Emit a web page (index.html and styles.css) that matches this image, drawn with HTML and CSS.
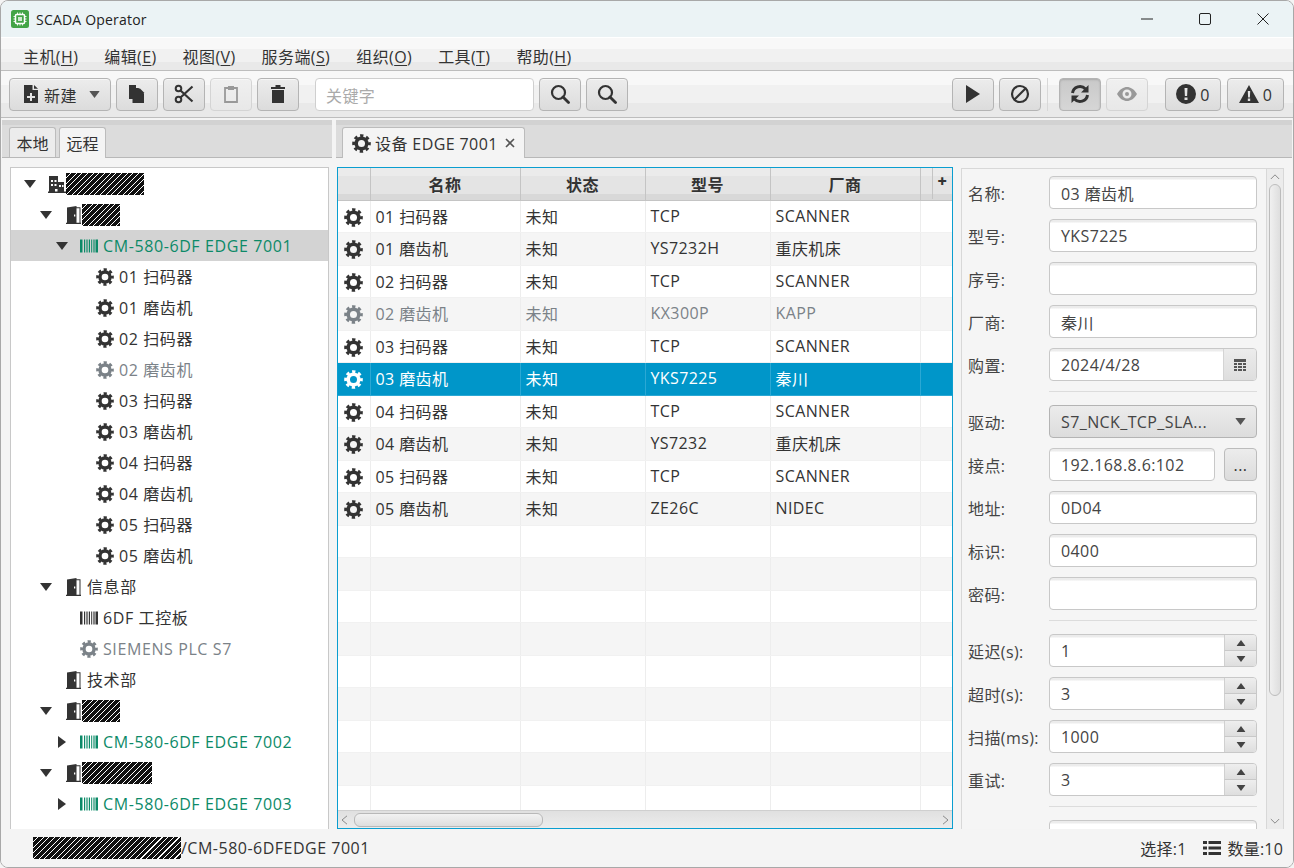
FILE: index.html
```html
<!DOCTYPE html>
<html lang="zh">
<head>
<meta charset="utf-8">
<title>SCADA Operator</title>
<link rel="stylesheet" href="styles.css">
</head>
<body>
<svg class="defs" width="0" height="0">
  <symbol id="gear" viewBox="0 0 20 20">
    <circle cx="10" cy="10" r="5.6" fill="none" stroke="currentColor" stroke-width="3.8"/>
    <circle cx="10" cy="10" r="8.2" fill="none" stroke="currentColor" stroke-width="3.2" stroke-dasharray="3.44 3" stroke-dashoffset="1.72"/>
  </symbol>
  <symbol id="door" viewBox="0 0 18 18">
    <path fill="currentColor" d="M2 18v-1.200h1V1.500L12.500 0v16.800h3V2.200h-3V1.200h4v15.600h.5V18H2zM10 8.500v2h1.300v-2H10z"/>
  </symbol>
  <symbol id="building" viewBox="0 0 18 18">
    <path fill="currentColor" fill-rule="evenodd" d="M0 18v-1.500h1V1h9v6h6v9.500h2V18H0zM3 9h2v2H3V9zm3.500 0h2v2h-2V9zM11 10h2v2h-2v-2zm3 0h1.500v2H14v-2zM3 5h2v2H3V5zm3.500 0h2v2h-2V5zM7 14h2.500v2.500H7V14z"/>
  </symbol>
  <symbol id="barcode" viewBox="0 0 18 18">
    <path fill="currentColor" d="M0 2.500h2.500v13H0zM4 2.500h1.200v13H4zM6.400 2.500h1.200v13H6.400zM8.800 2.500h1.200v13H8.800zM11.200 2.500h1v13h-1zM13.400 2.500h1.200v13h-1.200zM15.500 2.500H18v13h-2.500z"/>
  </symbol>
  <symbol id="down" viewBox="0 0 12 8"><path fill="currentColor" d="M0 0h12L6 8z"/></symbol>
  <symbol id="up" viewBox="0 0 12 8"><path fill="currentColor" d="M0 8h12L6 0z"/></symbol>
  <symbol id="right" viewBox="0 0 8 12"><path fill="currentColor" d="M0 0v12l8-6z"/></symbol>
  <symbol id="search" viewBox="0 0 20 20">
    <circle cx="8.500" cy="8.500" r="6.500" fill="none" stroke="currentColor" stroke-width="2.200"/>
    <path d="M13 13l5.500 5.500" stroke="currentColor" stroke-width="2.800" stroke-linecap="round"/>
  </symbol>
</svg>

<div class="window">
  <header class="titlebar">
    <svg class="app-icon" viewBox="0 0 18 18">
      <rect width="18" height="18" rx="2.500" fill="#43a447"/>
      <rect x="4.500" y="4.500" width="9" height="9" rx="1" fill="none" stroke="#fff" stroke-width="1.500"/>
      <rect x="7" y="7" width="4" height="4" fill="#cfe8d0"/>
      <path d="M6.500 2.500v2M9 2.500v2M11.500 2.500v2M6.500 13.500v2M9 13.500v2M11.500 13.500v2M2.500 6.500h2M2.500 9h2M2.500 11.500h2M13.500 6.500h2M13.500 9h2M13.500 11.500h2" stroke="#fff" stroke-width=".9"/>
    </svg>
    <span class="app-title">SCADA Operator</span>
    <div class="win-controls">
      <svg viewBox="0 0 12 12"><path d="M0 6h12" stroke="#222" stroke-width="1"/></svg>
      <svg viewBox="0 0 12 12"><rect x=".5" y=".5" width="11" height="11" rx="1.500" fill="none" stroke="#222"/></svg>
      <svg viewBox="0 0 12 12"><path d="M.5.500l11 11M11.500.500l-11 11" stroke="#222"/></svg>
    </div>
  </header>

  <nav class="menubar">
    <span>主机(<u>H</u>)</span><span>编辑(<u>E</u>)</span><span>视图(<u>V</u>)</span><span>服务端(<u>S</u>)</span><span>组织(<u>O</u>)</span><span>工具(<u>T</u>)</span><span>帮助(<u>H</u>)</span>
  </nav>

  <div class="toolbar">
    <button class="btn btn-new">
      <svg class="ico" viewBox="0 0 14 18"><path fill="#333" fill-rule="evenodd" d="M0 0h8.500v5H14v13H0zM10 0l4 3.800H10zM6 8v3H3v2h3v3h2v-3h3v-2H8V8z"/></svg>
      <span>新建</span>
      <svg class="caret" viewBox="0 0 12 8"><use href="#down"/></svg>
    </button>
    <button class="btn"><svg class="ico" viewBox="0 0 16 18"><path fill="#333" d="M0 0h7v14H0zM3.500 3H9.500l5.500 5.500V18H3.500zM10.500 3l5 5h-5z"/></svg></button>
    <button class="btn"><svg class="ico-l" viewBox="0 0 20 20"><circle cx="4.500" cy="15.500" r="2.800" fill="none" stroke="#333" stroke-width="2"/><circle cx="4.500" cy="4.500" r="2.800" fill="none" stroke="#333" stroke-width="2"/><path d="M6.500 6.500L18.500 17.500M6.500 13.500L18.500 2.500" stroke="#333" stroke-width="2.200"/></svg></button>
    <button class="btn disabled"><svg class="ico" viewBox="0 0 14 18"><path fill="none" stroke="#999" stroke-width="1.800" d="M1 3h12v14H1z"/><path fill="#999" d="M4 1h6v4H4z"/></svg></button>
    <button class="btn"><svg class="ico" viewBox="0 0 14 18"><path fill="#333" d="M1 5h12v13H1zM0 2h14v2H0zM4.500 0h5v2h-5z"/></svg></button>
    <div class="search-box">关键字</div>
    <button class="btn"><svg class="ico-l" viewBox="0 0 20 20"><use href="#search" color="#333"/></svg></button>
    <button class="btn"><svg class="ico-l" viewBox="0 0 20 20"><use href="#search" color="#333"/></svg></button>
    <div class="spacer"></div>
    <button class="btn"><svg class="ico" viewBox="0 0 14 18"><path fill="#333" d="M0 0l14 9-14 9z"/></svg></button>
    <button class="btn"><svg class="ico-l" viewBox="0 0 20 20"><circle cx="10" cy="10" r="8" fill="none" stroke="#333" stroke-width="2.200"/><path d="M15.500 4.500l-11 11" stroke="#333" stroke-width="2.200"/></svg></button>
    <div class="tb-sep"></div>
    <button class="btn pressed"><svg class="ico-l" viewBox="0 0 20 20"><path fill="none" stroke="#333" stroke-width="3" d="M2.500 9A7.500 7.500 0 0 1 15.500 5M17.500 11A7.500 7.500 0 0 1 4.500 15"/><path fill="#333" d="M18.500 1v7.500H11zM1.500 19v-7.500H9z"/></svg></button>
    <button class="btn disabled"><svg class="ico-l" viewBox="0 0 20 14"><path fill="#999" fill-rule="evenodd" d="M0 7C3 2 6.500 0 10 0s7 2 10 7c-3 5-6.500 7-10 7S3 12 0 7zm10-4.500a4.500 4.500 0 1 0 0 9 4.500 4.500 0 0 0 0-9zM10 5a2 2 0 1 1 0 4 2 2 0 0 1 0-4z"/></svg></button>
    <button class="btn btn-count first"><svg class="ico-l" viewBox="0 0 20 20"><path fill="#333" fill-rule="evenodd" d="M10 0a10 10 0 1 1 0 20 10 10 0 0 1 0-20zM8.500 4l.4 8h2.200l.4-8zM8.500 13.500v2.500h3v-2.500z"/></svg><span>0</span></button>
    <button class="btn btn-count"><svg class="ico-l" viewBox="0 0 20 18"><path fill="#333" fill-rule="evenodd" d="M10 0l10 18H0zM8.800 6l.3 6.500h1.800l.3-6.500zM8.800 13.500V16h2.400v-2.500z"/></svg><span>0</span></button>
  </div>

  <main class="main">
    <section class="left-pane">
      <div class="tab-header">
        <div class="tab">本地</div>
        <div class="tab active">远程</div>
      </div>
      <div class="tree-wrap">
        <div class="tree">
          <div class="row l0"><svg class="arrow"><use href="#down"/></svg><svg class="node"><use href="#building"/></svg><i class="redact r78"></i></div>
          <div class="row l1"><svg class="arrow"><use href="#down"/></svg><svg class="node"><use href="#door"/></svg><i class="redact r38"></i></div>
          <div class="row l2 current"><svg class="arrow"><use href="#down"/></svg><svg class="node green"><use href="#barcode"/></svg><span class="green latin">CM-580-6DF EDGE 7001</span></div>
          <div class="row l3"><span class="arrow"></span><svg class="node"><use href="#gear"/></svg><span>01 扫码器</span></div>
          <div class="row l3"><span class="arrow"></span><svg class="node"><use href="#gear"/></svg><span>01 磨齿机</span></div>
          <div class="row l3"><span class="arrow"></span><svg class="node"><use href="#gear"/></svg><span>02 扫码器</span></div>
          <div class="row l3 muted"><span class="arrow"></span><svg class="node"><use href="#gear"/></svg><span>02 磨齿机</span></div>
          <div class="row l3"><span class="arrow"></span><svg class="node"><use href="#gear"/></svg><span>03 扫码器</span></div>
          <div class="row l3"><span class="arrow"></span><svg class="node"><use href="#gear"/></svg><span>03 磨齿机</span></div>
          <div class="row l3"><span class="arrow"></span><svg class="node"><use href="#gear"/></svg><span>04 扫码器</span></div>
          <div class="row l3"><span class="arrow"></span><svg class="node"><use href="#gear"/></svg><span>04 磨齿机</span></div>
          <div class="row l3"><span class="arrow"></span><svg class="node"><use href="#gear"/></svg><span>05 扫码器</span></div>
          <div class="row l3"><span class="arrow"></span><svg class="node"><use href="#gear"/></svg><span>05 磨齿机</span></div>
          <div class="row l1"><svg class="arrow"><use href="#down"/></svg><svg class="node"><use href="#door"/></svg><span>信息部</span></div>
          <div class="row l2"><span class="arrow"></span><svg class="node"><use href="#barcode"/></svg><span>6DF 工控板</span></div>
          <div class="row l2 muted"><span class="arrow"></span><svg class="node"><use href="#gear"/></svg><span class="latin">SIEMENS PLC S7</span></div>
          <div class="row l1"><span class="arrow"></span><svg class="node"><use href="#door"/></svg><span>技术部</span></div>
          <div class="row l1"><svg class="arrow"><use href="#down"/></svg><svg class="node"><use href="#door"/></svg><i class="redact r38"></i></div>
          <div class="row l2"><svg class="arrow side"><use href="#right"/></svg><svg class="node green"><use href="#barcode"/></svg><span class="green latin">CM-580-6DF EDGE 7002</span></div>
          <div class="row l1"><svg class="arrow"><use href="#down"/></svg><svg class="node"><use href="#door"/></svg><i class="redact r70"></i></div>
          <div class="row l2"><svg class="arrow side"><use href="#right"/></svg><svg class="node green"><use href="#barcode"/></svg><span class="green latin">CM-580-6DF EDGE 7003</span></div>
        </div>
      </div>
    </section>

    <section class="right-pane">
      <div class="tab-header doc">
        <div class="tab active doc-tab">
          <svg class="node"><use href="#gear"/></svg><span>设备 EDGE 7001</span>
          <svg class="close" viewBox="0 0 10 10"><path d="M1 1l8 8M9 1l-8 8" stroke="#555" stroke-width="1.600"/></svg>
        </div>
      </div>
      <div class="doc-body">
        <div class="table-box">
          <div class="table-clip">
            <table class="grid">
              <colgroup><col class="c-i"><col class="c-n"><col class="c-s"><col class="c-m"><col class="c-v"><col></colgroup>
              <thead><tr><th></th><th>名称</th><th>状态</th><th>型号</th><th>厂商</th><th class="plus-cell"><span class="plus">+</span></th></tr></thead>
              <tbody>
                <tr><td class="ic"><svg class="node"><use href="#gear"/></svg></td><td>01 扫码器</td><td>未知</td><td>TCP</td><td>SCANNER</td><td></td></tr>
                <tr><td class="ic"><svg class="node"><use href="#gear"/></svg></td><td>01 磨齿机</td><td>未知</td><td>YS7232H</td><td>重庆机床</td><td></td></tr>
                <tr><td class="ic"><svg class="node"><use href="#gear"/></svg></td><td>02 扫码器</td><td>未知</td><td>TCP</td><td>SCANNER</td><td></td></tr>
                <tr class="muted"><td class="ic"><svg class="node"><use href="#gear"/></svg></td><td>02 磨齿机</td><td>未知</td><td>KX300P</td><td>KAPP</td><td></td></tr>
                <tr><td class="ic"><svg class="node"><use href="#gear"/></svg></td><td>03 扫码器</td><td>未知</td><td>TCP</td><td>SCANNER</td><td></td></tr>
                <tr class="selected"><td class="ic"><svg class="node"><use href="#gear"/></svg></td><td>03 磨齿机</td><td>未知</td><td>YKS7225</td><td>秦川</td><td></td></tr>
                <tr><td class="ic"><svg class="node"><use href="#gear"/></svg></td><td>04 扫码器</td><td>未知</td><td>TCP</td><td>SCANNER</td><td></td></tr>
                <tr><td class="ic"><svg class="node"><use href="#gear"/></svg></td><td>04 磨齿机</td><td>未知</td><td>YS7232</td><td>重庆机床</td><td></td></tr>
                <tr><td class="ic"><svg class="node"><use href="#gear"/></svg></td><td>05 扫码器</td><td>未知</td><td>TCP</td><td>SCANNER</td><td></td></tr>
                <tr><td class="ic"><svg class="node"><use href="#gear"/></svg></td><td>05 磨齿机</td><td>未知</td><td>ZE26C</td><td>NIDEC</td><td></td></tr>
                <tr><td></td><td></td><td></td><td></td><td></td><td></td></tr>
                <tr><td></td><td></td><td></td><td></td><td></td><td></td></tr>
                <tr><td></td><td></td><td></td><td></td><td></td><td></td></tr>
                <tr><td></td><td></td><td></td><td></td><td></td><td></td></tr>
                <tr><td></td><td></td><td></td><td></td><td></td><td></td></tr>
                <tr><td></td><td></td><td></td><td></td><td></td><td></td></tr>
                <tr><td></td><td></td><td></td><td></td><td></td><td></td></tr>
                <tr><td></td><td></td><td></td><td></td><td></td><td></td></tr>
                <tr><td></td><td></td><td></td><td></td><td></td><td></td></tr>
              </tbody>
            </table>
          </div>
          <div class="hscroll">
            <svg class="sb-arrow" viewBox="0 0 8 12"><path d="M7 1L1 6l6 5" fill="none" stroke="#777"/></svg>
            <div class="hthumb-track"><div class="hthumb"></div></div>
            <svg class="sb-arrow" viewBox="0 0 8 12"><path d="M1 1l6 5-6 5" fill="none" stroke="#777"/></svg>
          </div>
        </div>

        <div class="form-box">
          <div class="form">
            <div class="f-row"><label>名称:</label><div class="field">03 磨齿机</div></div>
            <div class="f-row"><label>型号:</label><div class="field">YKS7225</div></div>
            <div class="f-row"><label>序号:</label><div class="field"></div></div>
            <div class="f-row"><label>厂商:</label><div class="field">秦川</div></div>
            <div class="f-row"><label>购置:</label><div class="field joined"><span class="grow">2024/4/28</span><span class="cal"><svg viewBox="0 0 12 12"><path fill="#555" d="M0 0h12v3H0zM0 4h3v2H0zM4 4h4v2H4zM9 4h3v2H9zM0 7h3v2H0zM4 7h4v2H4zM9 7h3v2H9zM0 10h3v2H0zM4 10h4v2H4zM9 10h3v2H9z"/></svg></span></div></div>
            <div class="f-sep"></div>
            <div class="f-row"><label>驱动:</label><div class="combo"><span class="grow">S7_NCK_TCP_SLA...</span><svg class="caret" viewBox="0 0 12 8"><use href="#down"/></svg></div></div>
            <div class="f-row"><label>接点:</label><div class="field short">192.168.8.6:102</div><div class="more">...</div></div>
            <div class="f-row"><label>地址:</label><div class="field">0D04</div></div>
            <div class="f-row"><label>标识:</label><div class="field">0400</div></div>
            <div class="f-row"><label>密码:</label><div class="field"></div></div>
            <div class="f-sep"></div>
            <div class="f-row"><label>延迟(s):</label><div class="field joined"><span class="grow">1</span><span class="spin"><b><svg viewBox="0 0 12 8"><use href="#up"/></svg></b><b><svg viewBox="0 0 12 8"><use href="#down"/></svg></b></span></div></div>
            <div class="f-row"><label>超时(s):</label><div class="field joined"><span class="grow">3</span><span class="spin"><b><svg viewBox="0 0 12 8"><use href="#up"/></svg></b><b><svg viewBox="0 0 12 8"><use href="#down"/></svg></b></span></div></div>
            <div class="f-row"><label>扫描(ms):</label><div class="field joined"><span class="grow">1000</span><span class="spin"><b><svg viewBox="0 0 12 8"><use href="#up"/></svg></b><b><svg viewBox="0 0 12 8"><use href="#down"/></svg></b></span></div></div>
            <div class="f-row"><label>重试:</label><div class="field joined"><span class="grow">3</span><span class="spin"><b><svg viewBox="0 0 12 8"><use href="#up"/></svg></b><b><svg viewBox="0 0 12 8"><use href="#down"/></svg></b></span></div></div>
            <div class="f-sep"></div>
            <div class="f-row"><label></label><div class="field"></div></div>
          </div>
          <div class="vscroll">
            <svg class="sb-arrow-v" viewBox="0 0 12 8"><path d="M1 7l5-5 5 5" fill="none" stroke="#777"/></svg>
            <div class="vthumb-track"><div class="vthumb"></div></div>
            <svg class="sb-arrow-v" viewBox="0 0 12 8"><path d="M1 1l5 5 5-5" fill="none" stroke="#777"/></svg>
          </div>
        </div>
      </div>
    </section>
  </main>

  <footer class="statusbar">
    <i class="redact r148"></i><span class="path">/CM-580-6DFEDGE 7001</span>
    <div class="spacer"></div>
    <span>选择:1</span>
    <svg class="list-ico" viewBox="0 0 18 14"><path fill="#333" d="M0 0h4v3H0zM5.500 0H18v3H5.500zM0 5.500h4v3H0zM5.500 5.500H18v3H5.500zM0 11h4v3H0zM5.500 11H18v3H5.500z"/></svg>
    <span>数量:10</span>
  </footer>
</div>
</body>
</html>
```

FILE: styles.css
```css
* { box-sizing: border-box; }
html, body { margin: 0; height: 100%; background: #f4f4f4; }
body { font-family: "Open Sans", "Noto Sans CJK SC", sans-serif; font-size: 16px; letter-spacing: .4px; color: #333; overflow: hidden; }
.defs { position: absolute; }
u { text-decoration: underline; text-underline-offset: 2px; }

.window { display: flex; flex-direction: column; height: 868px; background: #f4f4f4; border: 1px solid #a8a8a8; border-radius: 8px; overflow: hidden; }

.titlebar { display: flex; align-items: center; height: 37px; flex: none; padding-left: 10px; background: #ebf3f5; border-bottom: 1px solid #fff; }
.app-icon { width: 18px; height: 18px; flex: none; }
.app-title { margin-left: 7px; font-size: 14px; letter-spacing: .2px; color: #222; }
.win-controls { margin-left: auto; display: flex; align-items: center; gap: 46px; padding-right: 24px; }
.win-controls svg { width: 12px; height: 12px; display: block; }

.menubar { display: flex; align-items: center; gap: 26px; height: 33px; flex: none; padding: 4px 0 0 22px; background: linear-gradient(#f8f8f8 0 35%, #f1f1f1 35% 75%, #e9e9e9 75%); border-bottom: 1px solid #bdbdbd; }

.toolbar { display: flex; align-items: center; height: 47px; flex: none; padding: 0 9px 0 8px; background: linear-gradient(#f8f8f8 0 30%, #f1f1f1 30% 70%, #e9e9e9 70%); border-bottom: 1px solid #bdbdbd; gap: 5px; }
.btn { display: flex; align-items: center; justify-content: center; gap: 5px; width: 42px; height: 33px; flex: none; padding: 0; font: inherit; letter-spacing: inherit; color: #333; border: 1px solid #b4b4b4; border-radius: 4px; background: linear-gradient(#ececec, #dcdcdc); box-shadow: inset 0 1px 0 #f6f6f6; }
.btn span { padding-top: 1px; }
.btn.disabled { border-color: #d4d4d4; background: linear-gradient(#f0f0f0, #e8e8e8); }
.btn.pressed { background: linear-gradient(#c9c9c9, #d6d6d6); box-shadow: inset 0 1px 2px #aaa; }
.btn-new { width: 102px; justify-content: flex-start; padding-left: 13px; }
.btn-new .caret { margin-left: 7px; }
.caret { width: 11px; height: 7px; color: #555; flex: none; }
.ico { width: 16px; height: 18px; flex: none; }
.ico-l { width: 20px; height: 20px; flex: none; }
.btn-count { width: 57px; color: #333; gap: 4px; }
.btn-count.first { margin-left: 12px; margin-right: 1px; width: 56px; }
.search-box { width: 219px; height: 33px; margin-left: 11px; padding: 4px 10px; border: 1px solid #cfcfcf; border-radius: 4px; background: #fff; color: #aaa; flex: none; }
.spacer { flex: 1; }
.tb-sep { width: 1px; height: 33px; margin: 0 6px 0 1px; background: #d8d8d8; flex: none; }

.main { display: flex; flex: 1; min-height: 0; padding: 2px 0 0 1px; gap: 4px; }
.left-pane { width: 330px; flex: none; display: flex; flex-direction: column; min-height: 0; }
.right-pane { flex: 1; min-width: 0; display: flex; flex-direction: column; }

.tab-header { display: flex; align-items: flex-end; gap: 3px; height: 38px; flex: none; padding-left: 7px; background: linear-gradient(#d2d2d2 0 5px, #dcdcdc 5px); border-bottom: 1px solid #b8b8b8; }
.tab { height: 30px; width: 47px; display: flex; align-items: center; justify-content: center; border: 1px solid #bcbcbc; border-bottom: 0; border-radius: 3px 3px 0 0; background: #ececec; letter-spacing: 0; }
.tab.active { background: #f4f4f4; margin-bottom: -1px; height: 31px; }
.doc { padding-left: 6px; margin-right: 1px; }
.doc-tab { width: 183px; justify-content: flex-start; padding-left: 9px; letter-spacing: .4px; }
.doc-tab .node { width: 19px; height: 19px; margin-right: 4px; }
.close { width: 10px; height: 10px; margin-left: 7px; }

.tree-wrap { flex: 1; min-height: 0; padding: 9px 3px 0 8px; }
.tree { height: 100%; background: #fff; border: 1px solid #c8c8c8; border-bottom: 0; overflow: hidden; letter-spacing: .6px; }
.row { display: flex; align-items: center; height: 31px; white-space: nowrap; }
.row span { padding-bottom: 2px; }
.row span.latin { padding-bottom: 0; }
.l0 { padding-left: 10px; }
.l1 { padding-left: 26px; }
.l2 { padding-left: 42px; }
.l3 { padding-left: 58px; }
.arrow { width: 18px; height: 8px; margin-right: 9px; flex: none; color: #333; }
.arrow.side { height: 12px; }
.node { width: 18px; height: 18px; flex: none; margin-right: 5px; color: #333; }
.green { color: #0c8a68; }
.current { background: #d3d3d3; }
.muted, .muted .node, .muted td { color: #7b8288; }
.redact { display: block; height: 22px; flex: none; margin-left: -5px; background: repeating-linear-gradient(135deg, #111 0 3.2px, #fff 3.2px 4px); filter: blur(.7px); }
.r78 { width: 78px; }
.r38 { width: 38px; }
.r70 { width: 70px; }
.r148 { width: 148px; margin-left: 0; }

.doc-body { flex: 1; min-height: 0; display: flex; padding: 9px 9px 0 1px; gap: 8px; }
.table-box { width: 616px; flex: none; display: flex; flex-direction: column; border: 1px solid #0a9ed0; background: #fff; }
.table-clip { flex: 1; min-height: 0; overflow: hidden; }
.grid { width: 100%; border-collapse: collapse; table-layout: fixed; }
.c-i { width: 32px; }
.c-n { width: 150px; }
.c-s { width: 125px; }
.c-m { width: 125px; }
.c-v { width: 150px; }
.grid th { height: 32px; padding: 0; font-weight: 700; color: #333; text-align: center; background: linear-gradient(#ebebeb 0 25%, #e4e4e4 25% 80%, #d8d8d8 80%); border-right: 1px solid #c4c4c4; border-bottom: 1px solid #c4c4c4; }
.grid th.plus-cell { padding: 0; border-right: 0; }
.plus { display: block; height: 31px; margin-left: 11px; padding-bottom: 4px; border-left: 1px solid #c4c4c4; font-weight: 800; line-height: 26px; letter-spacing: 0; }
.grid td { height: 32.5px; padding: 0 5px 1px; white-space: nowrap; border-right: 1px solid #ededed; border-bottom: 1px solid #f1f1f1; }
.grid td:last-child { border-right: 0; }
.grid tbody tr:nth-child(even) { background: #f5f5f5; }
.grid td.ic { padding: 2px 0 0 6px; line-height: 0; }
.grid td.ic .node { width: 19px; height: 19px; margin: 0; }
.grid tr.selected { background: #0096c9; }
.grid tbody tr.selected:nth-child(even) { background: #0096c9; }
.grid tr.selected td { color: #fff; border-right-color: #2ba8d4; border-bottom-color: #2ba8d4; border-top: 1px solid #4db6db; }
.grid tr.selected .node { color: #fff; }

.hscroll { display: flex; align-items: center; height: 18px; flex: none; background: linear-gradient(#e0e0e0, #ececec); border-top: 1px solid #cfcfcf; padding: 0 3px; gap: 3px; }
.sb-arrow { width: 7px; height: 10px; flex: none; }
.hthumb-track { flex: 1; height: 14px; }
.hthumb { width: 189px; height: 14px; margin-left: 3px; border: 1px solid #b8b8b8; border-radius: 6px; background: linear-gradient(#f2f2f2, #dedede); }

.form-box { flex: 1; min-width: 0; display: flex; border: 1px solid #d8d8d8; border-bottom: 0; min-height: 0; margin-top: 1px; background: #f5f5f5; }
.form { flex: 1; min-width: 0; overflow: hidden; display: flex; flex-direction: column; gap: 10px; padding: 7px 9px 0 6px; }
.f-row { display: flex; align-items: center; height: 33px; flex: none; }
.f-row label { width: 81px; flex: none; white-space: nowrap; color: #444; }
.f-sep { height: 1px; flex: none; margin: 0 0 3px 81px; background: #dcdcdc; }
.field { flex: 1; min-width: 0; height: 33px; padding: 0 11px; display: flex; align-items: center; background: linear-gradient(#ececec 0 2px, #fff 3px); border: 1px solid #c8c8c8; border-radius: 4px; color: #444; }
.field.joined { padding: 0 0 0 11px; overflow: hidden; }
.field.short { flex: none; width: 166px; margin-right: 9px; }
.grow { flex: 1; min-width: 0; white-space: nowrap; overflow: hidden; }
.cal { width: 33px; height: 100%; display: flex; align-items: center; justify-content: center; background: linear-gradient(#ececec, #dedede); border-left: 1px solid #d4d4d4; flex: none; }
.cal svg { width: 12px; height: 12px; }
.combo { flex: 1; height: 33px; display: flex; align-items: center; padding: 0 10px 0 11px; border: 1px solid #b4b4b4; border-radius: 4px; background: linear-gradient(#ececec, #dcdcdc); color: #444; }
.more { width: 33px; height: 33px; flex: none; display: flex; align-items: center; justify-content: center; border: 1px solid #bcbcbc; border-radius: 4px; background: linear-gradient(#ececec, #dcdcdc); }
.spin { width: 32px; height: 100%; display: flex; flex-direction: column; flex: none; }
.spin b { flex: 1; display: flex; align-items: center; justify-content: center; background: linear-gradient(#eeeeee, #dedede); border-left: 1px solid #d0d0d0; }
.spin b + b { border-top: 1px solid #c8c8c8; }
.spin svg { width: 10px; height: 6px; color: #444; }

.vscroll { width: 17px; flex: none; display: flex; flex-direction: column; align-items: center; padding: 4px 0; background: #ececec; border-left: 1px solid #d8d8d8; gap: 4px; }
.sb-arrow-v { width: 10px; height: 7px; flex: none; }
.vthumb-track { flex: 1; width: 100%; padding: 0 2px; }
.vthumb { height: 512px; border: 1px solid #bcbcbc; border-radius: 6px; background: linear-gradient(90deg, #f0f0f0, #dedede); }

.statusbar { display: flex; align-items: center; height: 38px; flex: none; padding: 0 10px 0 32px; background: #f4f4f4; white-space: nowrap; letter-spacing: .2px; }
.statusbar .path { letter-spacing: .5px; }
.statusbar .list-ico { width: 18px; height: 14px; margin: 0 6px 0 17px; flex: none; }
```
